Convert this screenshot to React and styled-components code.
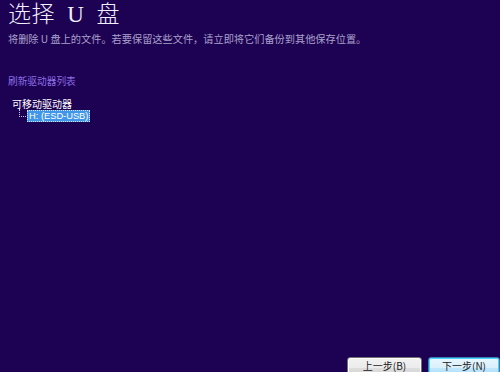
import React from "react";
import styled, { createGlobalStyle } from "styled-components";

const Global = createGlobalStyle`
  html, body { margin: 0; padding: 0; background: #1d0152; }
  body { font-family: "Noto Sans CJK SC", "Liberation Sans", sans-serif; }
`;

const Page = styled.div`
  width: 500px;
  height: 372px;
  box-sizing: border-box;
  background: #1d0152;
  display: flex;
  flex-direction: column;
  padding: 0 0 0 8px;
  overflow: hidden;
`;

const Title = styled.h1`
  margin: 0;
  font-family: "Liberation Serif", "Noto Sans CJK SC", serif;
  font-weight: 300;
  font-size: 23px;
  line-height: 30px;
  color: #f2f0fa;
  letter-spacing: 0.5px;
  word-spacing: 6px;
`;

const Subtitle = styled.p`
  margin: 2px 0 0;
  font-size: 10.2px;
  line-height: 14px;
  color: #aaa2cc;
`;

const RefreshLink = styled.a`
  display: block;
  margin-top: 28px;
  font-size: 9.7px;
  line-height: 14px;
  color: #8b6fe6;
  cursor: pointer;
`;

const Tree = styled.div`
  margin-top: 9px;
  padding-left: 4px;
  font-size: 10px;
  line-height: 13px;
  color: #ffffff;
`;

const Node = styled.div`
  display: flex;
  align-items: center;
`;

const Branch = styled.span`
  width: 6px;
  height: 7px;
  margin-left: 7px;
  margin-top: -6px;
  border-left: 1px dotted #c8c4dc;
  border-bottom: 1px dotted #c8c4dc;
`;

const Selected = styled.span`
  margin-left: 1px;
  padding: 0 2px;
  background: #4296ea;
  outline: 1px dotted #d8e8ff;
  outline-offset: -1px;
  color: #ffffff;
  font-family: "Liberation Sans", "Noto Sans CJK SC", sans-serif;
  font-size: 9.3px;
  line-height: 12px;
`;

const Footer = styled.div`
  margin-top: auto;
  margin-bottom: -8px;
  display: flex;
  justify-content: flex-end;
  gap: 6px;
`;

const Button = styled.button`
  width: ${(p) => (p.$default ? "72px" : "75px")};
  height: 23px;
  box-sizing: border-box;
  border-radius: 3px;
  border: 1px solid ${(p) => (p.$default ? "#3c7fb1" : "#707070")};
  background: ${(p) =>
    p.$default
      ? "linear-gradient(#eaf6fd, #d9f0fc 50%, #bee6fd 50%, #a7d9f5)"
      : "linear-gradient(#f2f2f2, #ebebeb 50%, #dddddd 50%, #cfcfcf)"};
  box-shadow: inset 0 0 0 1px ${(p) => (p.$default ? "#48d2ff" : "#fcfcfc")};
  font-family: "Noto Sans CJK SC", "Liberation Sans", sans-serif;
  font-size: 10px;
  color: #1a1a1a;
  padding: 0 0 6px;
  line-height: 13px;
  white-space: nowrap;
`;

export default function App() {
  return (
    <>
      <Global />
      <Page>
        <Title>选择 U 盘</Title>
        <Subtitle>将删除 U 盘上的文件。若要保留这些文件，请立即将它们备份到其他保存位置。</Subtitle>
        <RefreshLink>刷新驱动器列表</RefreshLink>
        <Tree>
          <Node>可移动驱动器</Node>
          <Node>
            <Branch />
            <Selected>H: (ESD-USB)</Selected>
          </Node>
        </Tree>
        <Footer>
          <Button>上一步(B)</Button>
          <Button $default>下一步(N)</Button>
        </Footer>
      </Page>
    </>
  );
}
